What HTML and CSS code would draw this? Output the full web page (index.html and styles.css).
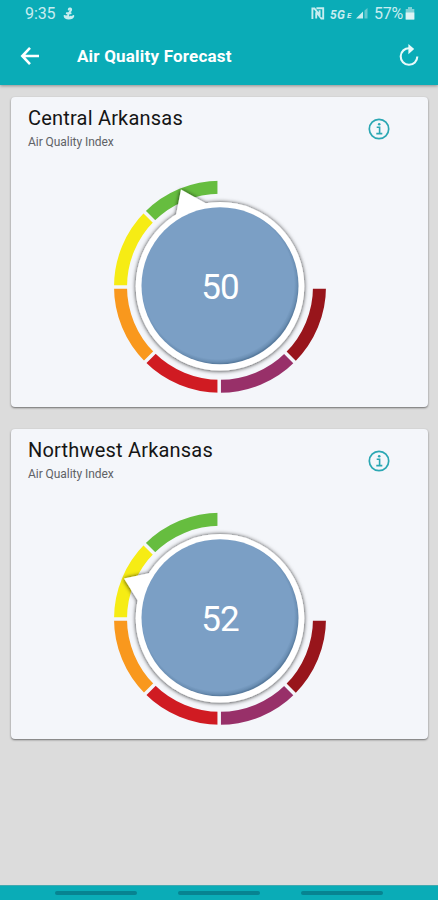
FILE: index.html
```html
<!DOCTYPE html>
<html lang="en">
<head>
<meta charset="utf-8">
<title>Air Quality Forecast</title>
<link rel="stylesheet" href="styles.css">
</head>
<body>
<svg class="defs" width="0" height="0" aria-hidden="true">
  <defs>
    <filter id="knob-shadow" x="-10%" y="-10%" width="120%" height="125%">
      <feDropShadow dx="0" dy=".3" stdDeviation="2.1" flood-color="#000" flood-opacity=".85"/>
    </filter>
    <radialGradient id="face" cx=".488" cy=".482" r=".515">
      <stop offset=".94" stop-color="#7b9fc5"/>
      <stop offset=".98" stop-color="#6a8eb3"/>
      <stop offset="1" stop-color="#587b9e"/>
    </radialGradient>
    <g id="scale" fill="none" stroke-width="13">
      <path stroke="#66bd3f" d="M120 17.3A99.5 99.5 0 0 0 49.64 46.44"/>
      <path stroke="#f6ec14" d="M49.64 46.44A99.5 99.5 0 0 0 20.5 116.8"/>
      <path stroke="#f9981d" d="M20.5 116.8A99.5 99.5 0 0 0 49.64 187.16"/>
      <path stroke="#d01b22" d="M49.64 187.16A99.5 99.5 0 0 0 120 216.3"/>
      <path stroke="#983069" d="M120 216.3A99.5 99.5 0 0 0 190.36 187.16"/>
      <path stroke="#98151b" d="M190.36 187.16A99.5 99.5 0 0 0 219.5 116.8"/>
      <path stroke="#f4f6fa" stroke-width="3.5" d="M119.2 8V226M11 117H229M41 38.5L120 117.2L41 196M120 117.2L198.5 196"/>
    </g>
    <g id="info" fill="none" stroke="#2ba7b3">
      <circle cx="11" cy="11" r="9.7" stroke-width="1.7"/>
      <path stroke-width="1.6" d="M8.7 9.2H11.6V15.2M8.3 15.6H14.3"/>
      <circle cx="11.2" cy="6.2" r="1.3" fill="#2ba7b3" stroke="none"/>
    </g>
  </defs>
</svg>

<header class="top">
  <div class="status">
    <span class="clock">9:35</span>
    <svg class="anchor" width="12" height="13" viewBox="0 0 12 13" fill="none" stroke="#c8edf0" stroke-width="2" stroke-linecap="round">
      <path d="M5.8 2.6Q6 1.2 7.3 1.5T7.8 3.6L5.4 7L4.7 11M3.8 6.2H7.6M1.6 9C2 12.3 9.3 12.3 10.3 9M3.2 9.3L5 11L8 9.8"/>
    </svg>
    <span class="grow"></span>
    <svg class="nfc" width="14" height="13" viewBox="0 0 14 13"><path d="M1.4 12V1.5H3.4L8.6 8.2V3.2M5.2 5.2V11.6M5.4 1.3H12.2V11.6H10.4L5.2 5" fill="none" stroke="#c8edf0" stroke-width="1.9"/></svg>
    <span class="net">5G</span>
    <span class="lte">E</span>
    <svg class="signal" width="12" height="13" viewBox="0 0 12 13"><path d="M0 11.5L7 4.5V11.5Z" fill="#c8edf0"/><path d="M8.5 3.5L11.5 1V11.5H8.5Z" fill="#64c9cf"/></svg>
    <span class="percent">57%</span>
    <svg class="battery" width="10" height="13" viewBox="0 0 10 13"><path d="M3 0H7V2H9.3V12.5H.7V2H3Z" fill="#7fd2d7"/><path d="M.7 5.5H9.3V12.5H.7Z" fill="#dcf4f5"/></svg>
  </div>
  <div class="bar">
    <svg class="back" width="20" height="20" viewBox="0 0 20 20" fill="none" stroke="#fff" stroke-width="2.6"><path d="M10 1.8L2.3 10L10 18.2M2.5 10H19"/></svg>
    <h1>Air Quality Forecast</h1>
    <svg class="refresh" width="20" height="24" viewBox="0 0 20 24"><path d="M10.4 5.2A8.3 8.3 0 1 0 18.3 13.5" fill="none" stroke="#e9fafa" stroke-width="2.1"/><path d="M9.4 1L15.2 6L9.4 11.3Z" fill="#e9fafa"/></svg>
  </div>
</header>

<main>
  <section class="card">
    <div class="card-head">
      <div><h2>Central Arkansas</h2><p>Air Quality Index</p></div>
      <svg class="info" width="22" height="22"><use href="#info"/></svg>
    </div>
    <div class="gauge">
      <svg width="240" height="230">
        <use href="#scale"/>
        <g fill="#fff" filter="url(#knob-shadow)"><circle cx="120" cy="116.3" r="84.3"/><path d="M81 19.5L107 34L95 50L76 45Z"/></g>
        <circle cx="120" cy="115.8" r="78.5" fill="url(#face)"/>
      </svg>
      <span class="value">50</span>
    </div>
  </section>
  <section class="card">
    <div class="card-head">
      <div><h2>Northwest Arkansas</h2><p>Air Quality Index</p></div>
      <svg class="info" width="22" height="22"><use href="#info"/></svg>
    </div>
    <div class="gauge">
      <svg width="240" height="230">
        <use href="#scale"/>
        <g fill="#fff" filter="url(#knob-shadow)"><circle cx="120" cy="116.3" r="84.3"/><path d="M24 76.5L50 71L56 86L38 99Z"/></g>
        <circle cx="120" cy="115.8" r="78.5" fill="url(#face)"/>
      </svg>
      <span class="value">52</span>
    </div>
  </section>
</main>

<footer class="nav"><i></i><i></i><i></i></footer>
</body>
</html>
```
FILE: styles.css
```css
* { box-sizing: border-box; margin: 0; padding: 0; }
body {
  width: 438px;
  height: 900px;
  display: flex;
  flex-direction: column;
  overflow: hidden;
  background: #dcdcdc;
  font-family: Roboto, sans-serif;
}
svg { display: block; flex: none; }
.defs { position: absolute; }
.top {
  height: 85px;
  flex: none;
  background: #0aacb7;
  box-shadow: 0 1px 3px rgba(0, 0, 0, .35);
}
.status {
  height: 27px;
  display: flex;
  align-items: center;
  padding: 0 23px 0 25px;
  color: #c8edf0;
  font-size: 16px;
  line-height: 27px;
}
.clock { width: 32px; letter-spacing: -.1px; }
.anchor { margin-left: 6px; }
.grow { flex: 1; }
.nfc { margin-right: 5px; }
.net { padding-top: 3px; font-size: 12px; font-weight: 700; font-style: italic; width: 17px; letter-spacing: .2px; }
.lte { padding-top: 4px; font-size: 8px; width: 9px; font-weight: 700; font-style: italic; }
.signal { margin-right: 6px; }
.percent { width: 31px; letter-spacing: -.3px; }
.bar {
  height: 57px;
  display: flex;
  align-items: center;
  padding: 0 19px 0 20px;
}
.bar h1 {
  flex: 1;
  margin-left: 37px;
  color: #fff;
  font-size: 17px;
  font-weight: 700;
  line-height: 24px;
  letter-spacing: .2px;
}
.refresh { margin-top: -1px; }
main {
  flex: 1;
  display: flex;
  flex-direction: column;
  gap: 22px;
  padding: 12px 10px 0 11px;
}
.card {
  height: 310px;
  background: #f4f6fa;
  border-radius: 4px;
  box-shadow: 0 1px 2px rgba(0, 0, 0, .5);
}
.card-head {
  height: 73px;
  display: flex;
  justify-content: space-between;
  padding: 8px 38px 0 17px;
}
.card h2 {
  color: #151515;
  font-size: 20px;
  font-weight: 400;
  line-height: 26px;
  letter-spacing: .2px;
}
.card p {
  color: #606266;
  font-size: 12px;
  line-height: 23px;
  letter-spacing: -.05px;
}
.info { margin-top: 13px; }
.gauge {
  width: 240px;
  height: 230px;
  margin-left: 89px;
  display: grid;
}
.gauge > * { grid-area: 1 / 1; }
.value {
  align-self: start;
  justify-self: center;
  margin-top: 97px;
  color: #fff;
  font-size: 35px;
  line-height: 42px;
  letter-spacing: -.8px;
}
.nav {
  height: 15px;
  flex: none;
  display: flex;
  justify-content: center;
  gap: 41px;
  padding-top: 5px;
  background: #0aacb7;
  border-top: 1px solid #41a9b0;
}
.nav i {
  width: 82px;
  height: 4px;
  border-radius: 2px;
  background: #078391;
}
```
